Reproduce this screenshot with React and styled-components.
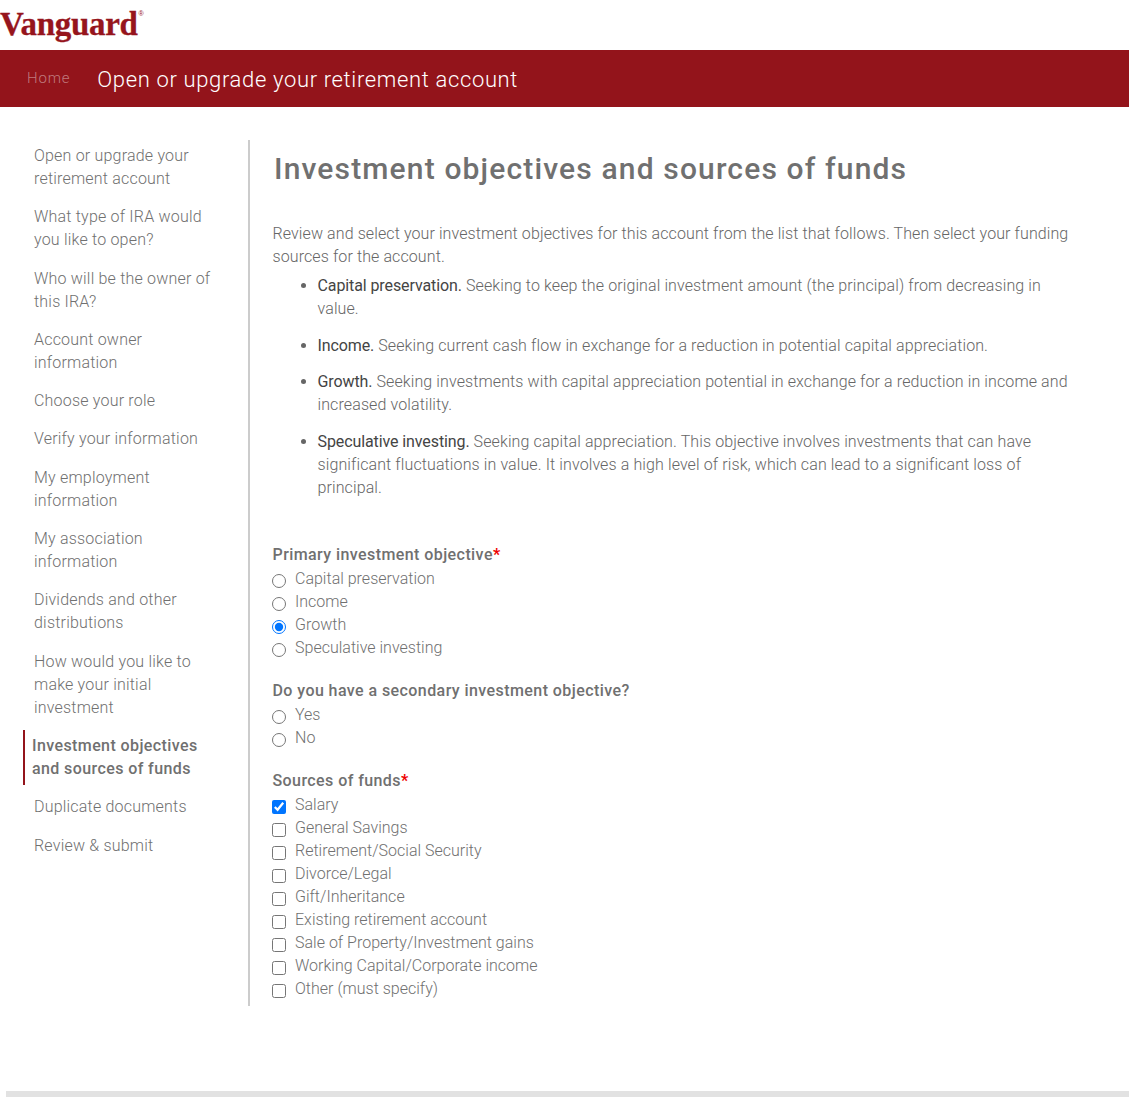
import React from 'react';
import styled, { createGlobalStyle } from 'styled-components';

const GlobalStyle = createGlobalStyle`
  html, body {
    margin: 0;
    padding: 0;
    background: #fff;
    font-family: Roboto, "Liberation Sans", sans-serif;
    font-weight: 300;
    color: #666;
  }
`;

const LogoBar = styled.div`
  height: 50px;
  overflow: hidden;
`;

const Logo = styled.div`
  display: inline-flex;
  align-items: flex-start;
  margin-top: 4.5px;
  font-family: "Liberation Serif", serif;
  font-weight: 700;
  font-size: 33px;
  line-height: 38px;
  letter-spacing: -0.3px;
  color: #96151d;
  -webkit-text-stroke: 0.3px #96151d;
`;

const LogoMark = styled.span`
  font-family: "Liberation Sans", sans-serif;
  font-weight: 400;
  font-size: 7px;
  line-height: 18px;
  letter-spacing: 0;
  margin-left: 1px;
  -webkit-text-stroke: 0;
`;

const Banner = styled.div`
  height: 57px;
  box-sizing: border-box;
  padding: 2px 0 0 27px;
  background: #93141b;
  display: flex;
  align-items: center;
  color: #fff;
`;

const HomeLink = styled.span`
  font-size: 15px;
  letter-spacing: 0.8px;
  color: #c07a7e;
  margin: -3px 27px 0 0;
`;

const BannerTitle = styled.span`
  font-size: 22px;
  letter-spacing: 0.65px;
`;

const Page = styled.div`
  display: flex;
  margin-top: 33px;
  height: 866px;
`;

const Sidebar = styled.nav`
  box-sizing: border-box;
  border-right: 2px solid #ccc;
  width: 250px;
  padding: 4px 30px 0 23px;
  display: flex;
  flex-direction: column;
  gap: 15.3px;
`;

const NavItem = styled.div`
  font-size: 16px;
  line-height: 23px;
  letter-spacing: ${(p) => (p.$active ? '0.4px' : '0.2px')};
  font-weight: ${(p) => (p.$active ? 500 : 300)};
  color: ${(p) => (p.$active ? '#707070' : '#707070')};
  padding: ${(p) => (p.$active ? '3.5px 0 5.5px 7px' : '0 0 0 11px')};
  margin: ${(p) => (p.$active ? '-3.5px 0 -5.5px' : '0')};
  border-left: ${(p) => (p.$active ? '2px solid #93141b' : 'none')};
`;

const Main = styled.main`
  flex: 1;
  padding: 0 49px 0 22px;
`;

const Title = styled.h1`
  margin: 9px 0 33px 2px;
  font-size: 30px;
  line-height: 40px;
  font-weight: 500;
  letter-spacing: 1.15px;
  color: #707070;
`;

const Intro = styled.p`
  margin: 0 0 0 0.5px;
  font-size: 16px;
  line-height: 23px;
  letter-spacing: 0.1px;
`;

const Bullets = styled.ul`
  margin: 6px 0 44px;
  padding-left: 45.5px;
`;

const Bullet = styled.li`
  font-size: 16px;
  line-height: 23px;
  letter-spacing: 0.11px;
  margin-bottom: 13.7px;
  &:last-child { margin-bottom: 0; }
`;

const Lead = styled.span`
  font-weight: 400;
  letter-spacing: -0.1px;
  color: #444;
`;

const Group = styled.div`
  margin-bottom: 19.2px;
`;

const GroupLabel = styled.div`
  margin: 0 0 2px 0.5px;
  font-size: 16px;
  line-height: 23px;
  font-weight: 500;
  letter-spacing: 0.42px;
  color: #707070;
`;

const Required = styled.span`
  color: #e00;
  font-weight: 700;
  font-size: 16px;
  letter-spacing: 0;
`;

const Option = styled.label`
  display: flex;
  align-items: center;
  height: 23px;
  font-size: 16px;
  letter-spacing: 0.01px;
  color: #707070;
`;

const Control = styled.input`
  width: 14px;
  height: 14px;
  margin: 3px 9px 0 0;
  flex: none;
`;

const OptionText = styled.span`
  margin-top: -2px;
`;

const Footer = styled.div`
  margin: 85px 0 0 6px;
  height: 6px;
  background: #e2e2e2;
`;

const navItems = [
  'Open or upgrade your retirement account',
  'What type of IRA would you like to open?',
  'Who will be the owner of this IRA?',
  'Account owner information',
  'Choose your role',
  'Verify your information',
  'My employment information',
  'My association information',
  'Dividends and other distributions',
  'How would you like to make your initial investment',
  'Investment objectives and sources of funds',
  'Duplicate documents',
  'Review & submit',
];

const objectives = [
  ['Capital preservation.', 'Seeking to keep the original investment amount (the principal) from decreasing in value.'],
  ['Income.', 'Seeking current cash flow in exchange for a reduction in potential capital appreciation.'],
  ['Growth.', 'Seeking investments with capital appreciation potential in exchange for a reduction in income and increased volatility.'],
  ['Speculative investing.', 'Seeking capital appreciation. This objective involves investments that can have significant fluctuations in value. It involves a high level of risk, which can lead to a significant loss of principal.'],
];

const primary = ['Capital preservation', 'Income', 'Growth', 'Speculative investing'];

const sources = [
  'Salary',
  'General Savings',
  'Retirement/Social Security',
  'Divorce/Legal',
  'Gift/Inheritance',
  'Existing retirement account',
  'Sale of Property/Investment gains',
  'Working Capital/Corporate income',
  'Other (must specify)',
];

const App = () => {
  return (
    <>
      <GlobalStyle />
      <LogoBar>
        <Logo>Vanguard<LogoMark>®</LogoMark></Logo>
      </LogoBar>
      <Banner>
        <HomeLink>Home</HomeLink>
        <BannerTitle>Open or upgrade your retirement account</BannerTitle>
      </Banner>
      <Page>
        <Sidebar>
          {navItems.map((item) => (
            <NavItem key={item} $active={item.startsWith('Investment objectives')}>{item}</NavItem>
          ))}
        </Sidebar>
        <Main>
          <Title>Investment objectives and sources of funds</Title>
          <Intro>
            Review and select your investment objectives for this account from the list that follows. Then select your funding sources for the account.
          </Intro>
          <Bullets>
            {objectives.map(([lead, text]) => (
              <Bullet key={lead}><Lead>{lead}</Lead> {text}</Bullet>
            ))}
          </Bullets>
          <Group>
            <GroupLabel>Primary investment objective<Required>*</Required></GroupLabel>
            {primary.map((item) => (
              <Option key={item}>
                <Control type="radio" name="primary" defaultChecked={item === 'Growth'} />
                <OptionText>{item}</OptionText>
              </Option>
            ))}
          </Group>
          <Group>
            <GroupLabel>Do you have a secondary investment objective?</GroupLabel>
            {['Yes', 'No'].map((item) => (
              <Option key={item}>
                <Control type="radio" name="secondary" />
                <OptionText>{item}</OptionText>
              </Option>
            ))}
          </Group>
          <Group>
            <GroupLabel>Sources of funds<Required>*</Required></GroupLabel>
            {sources.map((item) => (
              <Option key={item}>
                <Control type="checkbox" defaultChecked={item === 'Salary'} />
                <OptionText>{item}</OptionText>
              </Option>
            ))}
          </Group>
        </Main>
      </Page>
      <Footer />
    </>
  );
};

export default App;
